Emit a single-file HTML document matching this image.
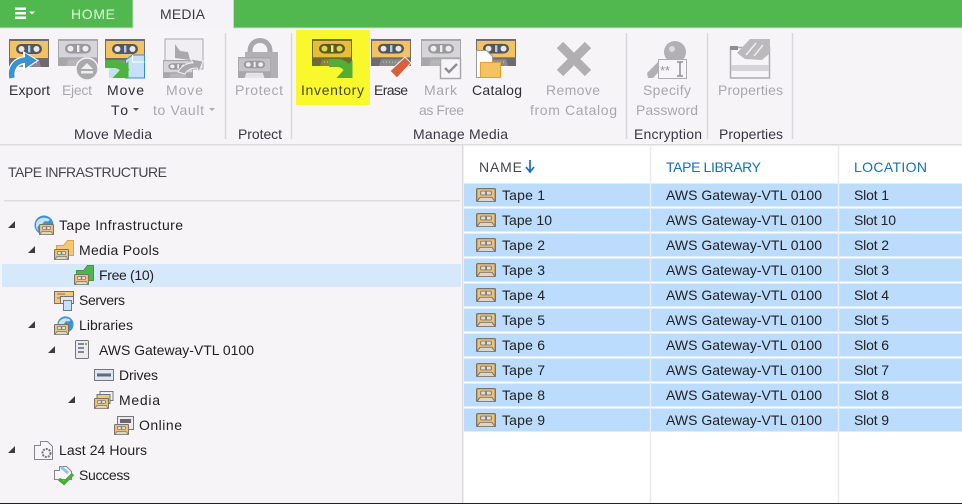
<!DOCTYPE html>
<html><head><meta charset="utf-8"><style>
html,body{margin:0;padding:0;background:#f7f4f8}
svg{display:block;font-family:"Liberation Sans",sans-serif}
text{font-size:14px;fill:#2e2e34}
.g{fill:#a9a7ad}
.gh{fill:#37383f;font-size:14px}
.b{fill:#1b6fb5}
.t{fill:#222}
</style></head><body>
<svg width="962" height="504" viewBox="0 0 962 504" xmlns="http://www.w3.org/2000/svg">
<defs>
<symbol id="tl" viewBox="0 0 40 28" preserveAspectRatio="none" overflow="visible">
<rect width="40" height="28" fill="var(--d,#6c6c6c)"/>
<rect x="1" y="2" width="38" height="17" fill="var(--o,#f4c163)"/>
<rect x="7" y="5" width="26" height="10" rx="5" fill="var(--p,#55555a)"/>
<circle cx="12.500" cy="10" r="3" fill="var(--h,#e8e8e8)"/><circle cx="27.500" cy="10" r="3" fill="var(--h,#e8e8e8)"/>
<rect x="19" y="6.500" width="2.400" height="7" fill="var(--h2,#a8d0f2)"/>
<path d="M8 28l2-7h20l2 7z" fill="var(--d2,#8a8a8a)"/>
<path d="M12 24h16" stroke="#ccc" stroke-width="1" stroke-dasharray="1 2"/>
</symbol>
<symbol id="ts" viewBox="0 0 20 15" preserveAspectRatio="none" overflow="visible">
<rect x=".7" y=".7" width="18.600" height="13.600" rx="1" fill="#f3c271" stroke="#7b7365" stroke-width="1.400"/>
<rect x="4" y="2.800" width="12" height="5.200" rx="1.500" fill="#85827b"/>
<rect x="5.200" y="3.900" width="3.800" height="3" fill="#e2dfd8"/><rect x="11" y="3.900" width="3.800" height="3" fill="#e2dfd8"/>
<path d="M1 14.500l3-4.500h12l3 4.500z" fill="#d9d6cf" stroke="#7b7365"/>
</symbol>
<symbol id="globe" viewBox="0 0 20 20" overflow="visible">
<circle cx="10" cy="10" r="9.500" fill="#3d95d6"/>
<path d="M3 6c4-4 8-4 12-2 2 2-2 3-4 2-2 1-2 4-5 4-3 1-3 4-1 6-3-1-4-7-2-10z" fill="#c7e2f5"/>
</symbol>
<symbol id="tri" viewBox="0 0 7 7"><path d="M7 0v7H0z" fill="#3c3c3c"/></symbol>
<symbol id="folder" viewBox="0 0 18 16" overflow="visible">
<path d="M.5 15.500V5.500h7l4-5h6v15z" fill="var(--f,#f5c673)" stroke="var(--fs,#e2a437)"/>
</symbol>
</defs>

<rect width="962" height="504" fill="#f7f4f8"/>
<!-- top band -->
<rect width="962" height="27.500" fill="#50b84e"/>
<rect x="133" y="0" width="100.500" height="29" fill="#f6f3f8"/>
<path d="M133 0v28M233.500 0v28" stroke="#c9d8c6"/>
<rect x="0" y="27.500" width="133" height="1" fill="#d7dcd5"/><rect x="233.500" y="27.500" width="729" height="1" fill="#d7dcd5"/>
<path d="M15 7.500h11V10H15zM15 12h11v2.500H15zM15 16.500h11V19H15z" fill="#fff"/>
<path d="M29 11.500h6l-3 3z" fill="#fff"/>
<text x="71" y="19" textLength="44" style="fill:#e6f6df">HOME</text>
<text x="160" y="19" textLength="45" style="fill:#3b3b42">MEDIA</text>

<!-- ribbon -->
<rect x="0" y="144" width="962" height="1.500" fill="#dcdbde"/>
<path d="M225.500 33v106M291.500 33v106M626.500 33v106M707.500 33v106M792.500 33v106" stroke="#d9d7db" stroke-width="1.500"/>
<rect x="296" y="30" width="74" height="75" fill="#f8f82c"/>

<!-- Export -->
<use href="#tl" x="9" y="39" width="40" height="28"/>
<path d="M12 78c-2-10 4-18 15-18" fill="none" stroke="#fff" stroke-width="8"/>
<path d="M23 51l16 9.500-16 10.500z" fill="#fff"/>
<path d="M12 78c-2-10 4-18 15-18" fill="none" stroke="#3a93d0" stroke-width="5.500"/>
<path d="M25 53l12 7.500-12 8z" fill="#3a93d0"/>
<!-- Eject -->
<g style="--d:#a7a7a9;--o:#d6d4d8;--p:#9a9a9d;--h:#eee;--h2:#eee;--d2:#b5b5b8">
<use href="#tl" x="58" y="39" width="40" height="27"/></g>
<circle cx="87" cy="69" r="11" fill="#a9a9ac" stroke="#f3f1f5" stroke-width="1.500"/>
<path d="M81 69l6-6 6 6zM81 71h12v2.500H81z" fill="#eee"/>
<!-- Move To -->
<use href="#tl" x="105" y="39" width="40" height="28"/>
<path d="M125.500 78V60l7-5h12v23z" fill="#c7e0f7" stroke="#2f8fd0"/>
<path d="M109 66h16v12h-16z" fill="#c7e0f7"/>
<path d="M132.500 55v7h12" fill="none" stroke="#fff"/>
<path d="M105 64h9c6 0 9 3 12 8" fill="none" stroke="#4fb33f" stroke-width="8"/>
<path d="M128.500 61v17h-16z" fill="#4fb33f"/>
<!-- Move to vault -->
<rect x="165" y="39" width="38" height="30" fill="#f0eef2" stroke="#aaa8ac"/>
<path d="M175 44l5 7 8 1 2 8-15-2z" fill="#aaa8ac"/>
<g style="--d:#a7a7a9;--o:#d6d4d8;--p:#9a9a9d;--h:#eee;--h2:#eee;--d2:#b5b5b8">
<use href="#tl" x="163" y="60" width="30" height="18"/></g>
<path d="M178 72c3-6 9-9 15-9l-2-4 12 2-4 11-2-4c-6 0-10 2-12 6z" fill="#aaa8ac" stroke="#f0eef2"/>
<!-- Protect -->
<path d="M250 58V51c0-14 20-14 20 0v7" fill="none" stroke="#aaa8ac" stroke-width="5"/>
<rect x="245" y="52" width="33" height="26" fill="#b2b0b5"/>
<g style="--d:#a7a7a9;--o:#c4c2c6;--p:#9a9a9d;--h:#eee;--h2:#eee;--d2:#e6e4e8">
<use href="#tl" x="238" y="57" width="33" height="21"/></g>
<!-- Inventory -->
<g style="--o:#e8bf30;--d:#6c6a3a;--p:#5c5a2a;--h:#dcdc40;--h2:#f0f060;--d2:#86862e">
<use href="#tl" x="312" y="39" width="40" height="27"/></g>
<path d="M329 63h8c6 0 9 3 12 8" fill="none" stroke="#53ae35" stroke-width="8"/>
<path d="M352.500 60v18h-16z" fill="#53ae35"/>
<!-- Erase -->
<use href="#tl" x="371" y="39" width="40" height="27"/>
<path d="M390 71l15-14 6 6-14 15z" fill="#d8603a" stroke="#f4eef2"/>
<!-- Mark -->
<g style="--d:#a7a7a9;--o:#d6d4d8;--p:#9a9a9d;--h:#eee;--h2:#eee;--d2:#b5b5b8">
<use href="#tl" x="421" y="39" width="40" height="27"/></g>
<rect x="440.500" y="58.500" width="20" height="20" fill="#f7f5f8" stroke="#a9a9ac" stroke-width="1.500"/>
<path d="M445 68l4 4 8-8" fill="none" stroke="#8f8f93" stroke-width="2.500"/>
<!-- Catalog -->
<use href="#tl" x="476" y="39" width="40" height="27"/>
<path d="M476.500 50.500h10l6 6v21h-16z" fill="#fff" stroke="#9b9b9f"/>
<path d="M480.500 77.500v-15h20v15z" fill="#f4c163" stroke="#e3a02a"/>
<!-- Remove -->
<path d="M560 45l28 28M588 45l-28 28" stroke="#b0afb2" stroke-width="9" fill="none"/>
<!-- Specify -->
<circle cx="675" cy="52" r="11" fill="#b2b0b5"/><circle cx="672" cy="49" r="3" fill="#dcdade"/>
<path d="M648 78l-1-5 14-14 5 5-13 14z" fill="#b2b0b5"/>
<rect x="658.500" y="59.500" width="28" height="19" fill="#f7f5f8" stroke="#aeacb1"/>
<text x="660" y="75" style="font-size:13px;fill:#98969b">**</text>
<path d="M677 62h6M680 62v14M677 76h6" stroke="#8f8f93" stroke-width="1.500" fill="none"/>
<!-- Properties -->
<rect x="730.500" y="47.500" width="39" height="30.500" fill="#f7f5f8" stroke="#aeacb1" stroke-width="1.500"/>
<path d="M730 46h8v4h-8z" fill="#8f8f93"/>
<path d="M737 53l13-14h20v14l-8 7-17-1z" fill="#bababd"/>
<path d="M746 55l10-12M754 56l9-11" stroke="#f0eef2" stroke-width="1.500"/>
<rect x="731" y="65" width="38" height="6" fill="#d6d4d8"/>

<!-- ribbon labels -->
<text x="9" y="95" textLength="41">Export</text>
<text class="g" x="62" y="95" textLength="30">Eject</text>
<text x="107" y="95" textLength="37">Move</text>
<text x="111" y="115" textLength="17">To</text>
<path d="M133 108h6l-3 3z" fill="#555"/>
<text class="g" x="166" y="95" textLength="37">Move</text>
<text class="g" x="153" y="115" textLength="51">to Vault</text>
<path d="M209 108h6l-3 3z" fill="#aaa"/>
<text class="g" x="235" y="95" textLength="48">Protect</text>
<text x="301" y="95" textLength="63" style="fill:#4a4a22">Inventory</text>
<text x="374" y="95" textLength="34">Erase</text>
<text class="g" x="424" y="95" textLength="33">Mark</text>
<text class="g" x="419" y="115" textLength="45">as Free</text>
<text x="472" y="95" textLength="50">Catalog</text>
<text class="g" x="546" y="95" textLength="54">Remove</text>
<text class="g" x="530" y="115" textLength="87">from Catalog</text>
<text class="g" x="643" y="95" textLength="48">Specify</text>
<text class="g" x="636" y="115" textLength="62">Password</text>
<text class="g" x="718" y="95" textLength="65">Properties</text>
<text class="gh" x="74" y="139" textLength="78">Move Media</text>
<text class="gh" x="238" y="139" textLength="44">Protect</text>
<text class="gh" x="413" y="139" textLength="95">Manage Media</text>
<text class="gh" x="634" y="139" textLength="68">Encryption</text>
<text class="gh" x="719" y="139" textLength="64">Properties</text>

<!-- left panel -->
<text x="8" y="177" textLength="159" style="fill:#45454a">TAPE INFRASTRUCTURE</text>
<rect x="4" y="200" width="456" height="1.500" fill="#dcdbde"/>
<rect x="2" y="264" width="459" height="23" fill="#d6e8fb"/>
<rect x="462" y="145" width="1.500" height="358" fill="#dcdbde"/>

<g class="tree">
<use href="#tri" x="8" y="221" width="7" height="7"/>
<use href="#tri" x="28" y="246" width="7" height="7"/>
<use href="#tri" x="28" y="321" width="7" height="7"/>
<use href="#tri" x="48" y="346" width="7" height="7"/>
<use href="#tri" x="68" y="396" width="7" height="7"/>
<use href="#tri" x="8" y="446" width="7" height="7"/>
</g>
<text class="t" x="59" y="230" textLength="124">Tape Infrastructure</text>
<text class="t" x="79" y="255" textLength="80">Media Pools</text>
<text class="t" x="99" y="280" textLength="55">Free (10)</text>
<text class="t" x="79" y="305" textLength="46">Servers</text>
<text class="t" x="79" y="330" textLength="54">Libraries</text>
<text class="t" x="99" y="355" textLength="155">AWS Gateway-VTL 0100</text>
<text class="t" x="119" y="380" textLength="39">Drives</text>
<text class="t" x="119" y="405" textLength="41">Media</text>
<text class="t" x="139" y="430" textLength="43">Online</text>
<text class="t" x="59" y="455" textLength="88">Last 24 Hours</text>
<text class="t" x="79" y="480" textLength="51">Success</text>

<!-- tree icons -->
<use href="#globe" x="34" y="215" width="20" height="20"/>
<use href="#ts" x="39" y="224" width="15" height="11"/>
<use href="#folder" x="56" y="240" width="18" height="16"/>
<use href="#ts" x="54" y="249" width="15" height="11"/>
<g style="--f:#4fb54a;--fs:#3e9c3a"><use href="#folder" x="76" y="265" width="18" height="16"/></g>
<use href="#ts" x="74" y="274" width="15" height="11"/>
<rect x="54.500" y="291.500" width="19" height="12" fill="#f5c673" stroke="#77736c"/>
<path d="M57 294h8M57 298h5" stroke="#77736c"/>
<rect x="60.500" y="296.500" width="13" height="7" fill="#e8e6ea" stroke="#77736c"/>
<rect x="63.500" y="300.500" width="8" height="10" fill="#c7e0f5" stroke="#5e7f9a"/>
<use href="#globe" x="57" y="316" width="17" height="17"/>
<use href="#ts" x="54" y="324" width="15" height="11"/>
<rect x="75.500" y="340.500" width="13" height="18" rx="1" fill="#eceaee" stroke="#77777b"/>
<path d="M78 344h6M78 348h6M78 352h6" stroke="#5a6a76" stroke-width="1.500"/>
<path d="M85 344h2" stroke="#44b040" stroke-width="1.500"/>
<rect x="94.500" y="369.500" width="19" height="11" fill="#dbe8f4" stroke="#77777b"/>
<rect x="97" y="373.500" width="14" height="3" fill="#667"/>
<rect x="100" y="391.500" width="13" height="9" fill="#f3f0f4" stroke="#77777b"/>
<rect x="97" y="394.500" width="13" height="9" fill="#f5c673" stroke="#77777b"/>
<use href="#ts" x="94" y="398" width="15" height="11"/>
<rect x="117.500" y="416.500" width="16" height="13" fill="#eceaee" stroke="#77777b"/>
<rect x="120" y="419" width="11" height="4" fill="#667"/>
<use href="#ts" x="114" y="424" width="15" height="11"/>
<path d="M34.500 445.500h6v-4h7l5 5v13h-18z" fill="#f7f5f8" stroke="#85858a"/>
<circle cx="46.500" cy="453" r="4" fill="none" stroke="#77777b" stroke-width="2" stroke-dasharray="2 1"/>
<path d="M54.500 470.500h5v-4h7l5 5v8h-17z" fill="#f7f5f8" stroke="#85858a"/>
<path d="M61 467l7 6" stroke="#8cc3ea" stroke-width="3"/>
<path d="M59 479l5 4 9-9" fill="none" stroke="#45ad3a" stroke-width="3.500"/>

<!-- right panel -->
<rect x="463.500" y="145.500" width="499" height="357.500" fill="#fff"/>
<text x="479" y="172" textLength="43" style="fill:#45454a">NAME</text>
<path d="M530 160v11M526 167l4 5 4-5" fill="none" stroke="#1b6fb5" stroke-width="1.700"/>
<text class="b" x="666" y="172" textLength="95">TAPE LIBRARY</text>
<text class="b" x="854" y="172" textLength="73">LOCATION</text>

<g fill="#bcdcfd">
<rect x="464" y="183.500" width="498" height="23"/>
<rect x="464" y="208.500" width="498" height="23"/>
<rect x="464" y="233.500" width="498" height="23"/>
<rect x="464" y="258.500" width="498" height="23"/>
<rect x="464" y="283.500" width="498" height="23"/>
<rect x="464" y="308.500" width="498" height="23"/>
<rect x="464" y="333.500" width="498" height="23"/>
<rect x="464" y="358.500" width="498" height="23"/>
<rect x="464" y="383.500" width="498" height="23"/>
<rect x="464" y="408.500" width="498" height="23"/>
</g>
<path d="M650.500 145v358M838.500 145v358" stroke="#e8ecf1" stroke-width="1.500"/>

<use href="#ts" x="476" y="188" width="20" height="14"/>
<use href="#ts" x="476" y="213" width="20" height="14"/>
<use href="#ts" x="476" y="238" width="20" height="14"/>
<use href="#ts" x="476" y="263" width="20" height="14"/>
<use href="#ts" x="476" y="288" width="20" height="14"/>
<use href="#ts" x="476" y="313" width="20" height="14"/>
<use href="#ts" x="476" y="338" width="20" height="14"/>
<use href="#ts" x="476" y="363" width="20" height="14"/>
<use href="#ts" x="476" y="388" width="20" height="14"/>
<use href="#ts" x="476" y="413" width="20" height="14"/>

<g class="r">
<text class="t" x="502" y="200" textLength="43">Tape 1</text>
<text class="t" x="502" y="225" textLength="50">Tape 10</text>
<text class="t" x="502" y="250" textLength="43">Tape 2</text>
<text class="t" x="502" y="275" textLength="43">Tape 3</text>
<text class="t" x="502" y="300" textLength="43">Tape 4</text>
<text class="t" x="502" y="325" textLength="43">Tape 5</text>
<text class="t" x="502" y="350" textLength="43">Tape 6</text>
<text class="t" x="502" y="375" textLength="43">Tape 7</text>
<text class="t" x="502" y="400" textLength="43">Tape 8</text>
<text class="t" x="502" y="425" textLength="43">Tape 9</text>
<text class="t" x="666" y="200" textLength="156">AWS Gateway-VTL 0100</text>
<text class="t" x="666" y="225" textLength="156">AWS Gateway-VTL 0100</text>
<text class="t" x="666" y="250" textLength="156">AWS Gateway-VTL 0100</text>
<text class="t" x="666" y="275" textLength="156">AWS Gateway-VTL 0100</text>
<text class="t" x="666" y="300" textLength="156">AWS Gateway-VTL 0100</text>
<text class="t" x="666" y="325" textLength="156">AWS Gateway-VTL 0100</text>
<text class="t" x="666" y="350" textLength="156">AWS Gateway-VTL 0100</text>
<text class="t" x="666" y="375" textLength="156">AWS Gateway-VTL 0100</text>
<text class="t" x="666" y="400" textLength="156">AWS Gateway-VTL 0100</text>
<text class="t" x="666" y="425" textLength="156">AWS Gateway-VTL 0100</text>
<text class="t" x="854" y="200" textLength="35">Slot 1</text>
<text class="t" x="854" y="225" textLength="42">Slot 10</text>
<text class="t" x="854" y="250" textLength="35">Slot 2</text>
<text class="t" x="854" y="275" textLength="35">Slot 3</text>
<text class="t" x="854" y="300" textLength="35">Slot 4</text>
<text class="t" x="854" y="325" textLength="35">Slot 5</text>
<text class="t" x="854" y="350" textLength="35">Slot 6</text>
<text class="t" x="854" y="375" textLength="35">Slot 7</text>
<text class="t" x="854" y="400" textLength="35">Slot 8</text>
<text class="t" x="854" y="425" textLength="35">Slot 9</text>
</g>
<rect x="0" y="503" width="962" height="1" fill="#222"/>
</svg>
</body></html>
